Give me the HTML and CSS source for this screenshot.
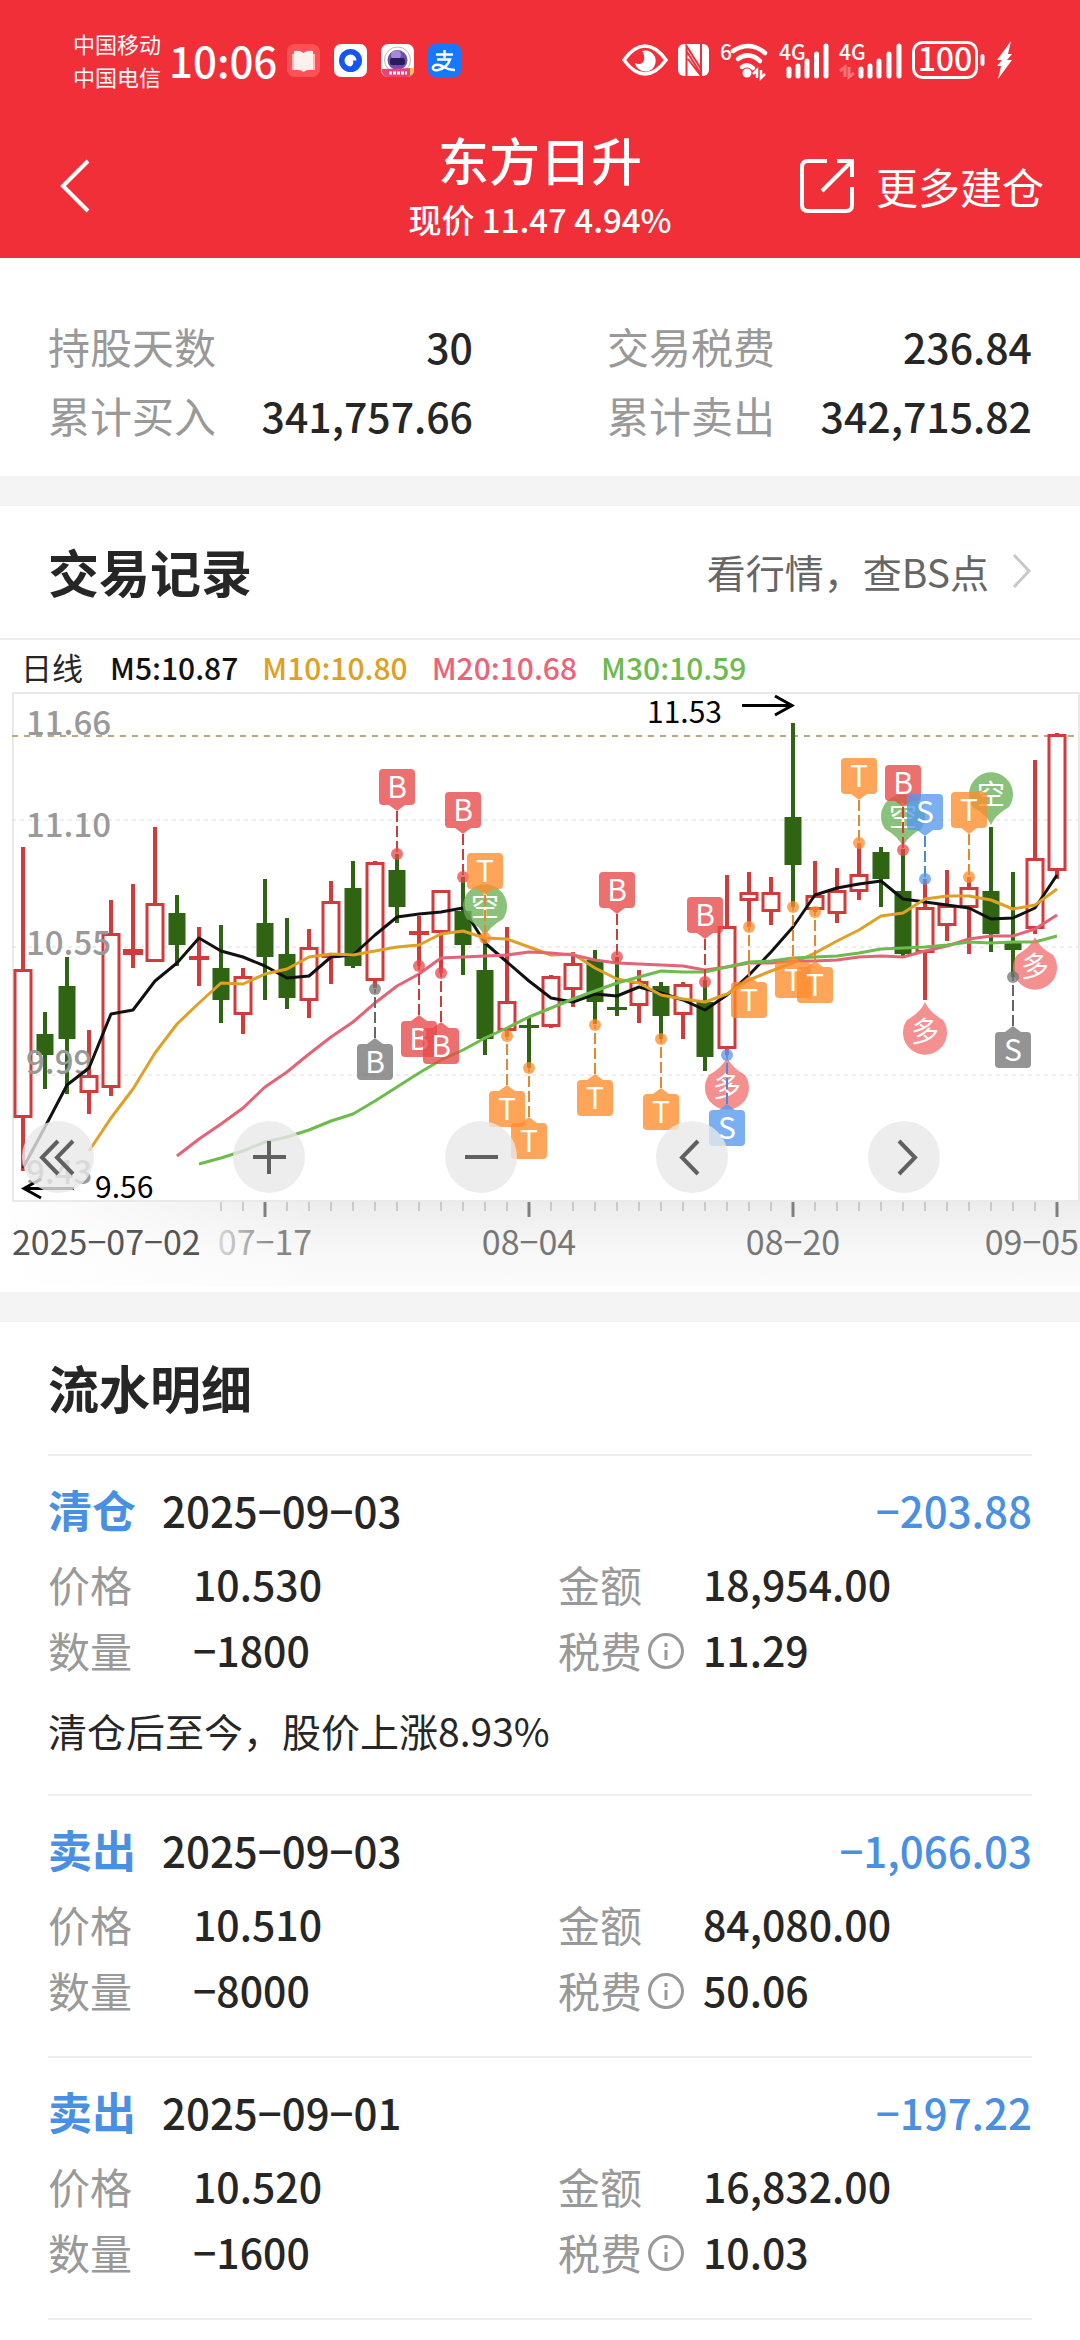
FILE: index.html
```html
<!DOCTYPE html>
<html lang="zh-CN">
<head>
    <meta charset="UTF-8">
    <meta name="viewport" content="width=device-width, initial-scale=1.0">
    <title>东方日升 交易记录</title>
    <link rel="stylesheet" href="styles.css">
</head>
<body>
    <header class="header">
        <div class="status-bar">
            <div class="carriers"><span>中国移动</span><span>中国电信</span></div>
            <span class="clock">10:06</span>
            <div class="app-icons">
                <svg viewBox="0 0 33 33"><rect width="33" height="33" rx="8" fill="#ff5257"/><path d="M5 10h7v16H5zM21 10h7v16h-7z" fill="#ffb9b9"/><path d="M7 7q6-1 9.500 2 3.500-3 9.500-2v19q-6-1-9.500 2-3.500-3-9.500-2z" fill="#fff0ee"/></svg>
                <svg viewBox="0 0 33 33"><rect width="33" height="33" rx="7" fill="#fff"/><circle cx="16.500" cy="16.500" r="11.500" fill="#1456f0"/><path d="M16.500 10.500a6 6 0 0 1 6 6h-3.500a5 5 0 0 1-2.500 6 6 6 0 0 1 0-12z" fill="#fff"/></svg>
                <svg viewBox="0 0 33 33"><rect width="33" height="33" rx="7" fill="#fff"/><circle cx="16.500" cy="16" r="13" fill="none" stroke="#bbb"/><circle cx="16.500" cy="16" r="10" fill="#6d4fb0"/><circle cx="15" cy="11" r="5" fill="#a58ad4"/><rect x="9" y="14" width="15" height="7" rx="2" fill="#2a1c5c"/><path d="M1 25l31-1v5q-1 4-6 4H7q-5 0-6-5z" fill="#e8447a"/><path d="M29 24h3v6l-3 2z" fill="#f4c04e"/><path d="M8 29h18" stroke="#fff" stroke-width="3" stroke-dasharray="3 1"/></svg>
                <svg viewBox="0 0 33 33"><rect width="33" height="33" rx="7" fill="#1677ff"/><path d="M8 10.500h17M16.500 6v8M9 15.500h13Q19 24 10 26q-6 1-5-3 2-4 9-1 7 4 13 4" fill="none" stroke="#fff" stroke-width="2.500"/></svg>
            </div>
            <div class="system-icons">
                <svg width="46" height="34" viewBox="0 0 46 34"><path d="M2 17Q12 3 23 3t21 14Q34 31 23 31T2 17z" fill="none" stroke="#fff" stroke-width="3.500"/><path d="M20 8a10.500 10.500 0 1 1-7 12q7 3 9-3 1-5-2-9z" fill="#fff"/></svg>
                <svg width="31" height="34" viewBox="0 0 31 34"><rect y="1" width="31" height="32" rx="6" fill="#fff"/><path d="M8.500 33V3L23 26M23 1v30L8.500 8M10 16l13 17" fill="none" stroke="#f12f38" stroke-width="2"/></svg>
                <svg width="50" height="38" viewBox="0 0 50 38"><text x="1" y="19" class="net-label">6</text><g fill="none" stroke="#fff" stroke-width="4.500" stroke-linecap="round"><path d="M14 10q17-11 32 2"/><path d="M19 18q11-8 22 2"/><path d="M23 26q6-4 11 1"/></g><circle cx="28" cy="32" r="4.500" fill="#fff"/><path d="M34 33l4-4v8M42 29v8l4-4" fill="none" stroke="#fff" stroke-width="2.500"/></svg>
                <svg width="50" height="38" viewBox="0 0 50 38"><text x="0" y="19" class="net-label">4G</text><path d="M10 28v7M19 25v10M28 20v15M37.500 13v22M47 5v30" stroke="#fff" stroke-width="5" stroke-linecap="round"/></svg>
                <svg width="63" height="38" viewBox="0 0 63 38"><text x="0" y="19" class="net-label">4G</text><path d="M1 30l5-4v10M10 26v10l5-4" fill="none" stroke="#ff7378" stroke-width="3"/><path d="M22 28v7M31 25v10M40 20v15M50 13v22M60 5v30" stroke="#fff" stroke-width="5" stroke-linecap="round"/></svg>
                <svg width="74" height="38" viewBox="0 0 74 38"><rect x="1.500" y="1.500" width="63" height="35" rx="9" fill="none" stroke="#fff" stroke-width="3"/><path d="M70.500 15v8" stroke="#fff" stroke-width="4" stroke-linecap="round"/><text x="33" y="30" class="battery-text">100</text></svg>
                <svg width="17" height="38" viewBox="0 0 17 38"><path d="M15 0L1 19h5l-5 6h4L2 38 16 19h-5l5-6h-4l3-13z" fill="#fff"/></svg>
            </div>
        </div>
        <nav class="nav">
            <button class="back" aria-label="返回">
                <svg width="30" height="54" viewBox="0 0 30 54"><path d="M28 2L3 27l25 25" fill="none" stroke="#fff" stroke-width="4"/></svg>
            </button>
            <div class="nav-title">
                <h1>东方日升</h1>
                <p>现价 11.47 4.94%</p>
            </div>
            <a class="more" href="#">
                <svg width="54" height="54" viewBox="0 0 54 54"><path d="M27 2H8q-6 0-6 6v38q0 6 6 6h38q6 0 6-6V28M37 2h15v16M51 3L22 32" fill="none" stroke="#fff" stroke-width="4"/></svg>
                <span>更多建仓</span>
            </a>
        </nav>
    </header>

    <section class="summary">
        <div class="summary-item"><span>持股天数</span><strong>30</strong></div>
        <div class="summary-item"><span>交易税费</span><strong>236.84</strong></div>
        <div class="summary-item"><span>累计买入</span><strong>341,757.66</strong></div>
        <div class="summary-item"><span>累计卖出</span><strong>342,715.82</strong></div>
    </section>

    <section class="records">
        <div class="records-head">
            <h2>交易记录</h2>
            <a class="quote-link" href="#">看行情，查BS点
                <svg width="20" height="36" viewBox="0 0 20 36"><path d="M2 2l15 16L2 34" fill="none" stroke="#c8c8c8" stroke-width="3"/></svg>
            </a>
        </div>
        <div class="legend">
            <span class="period">日线</span>
            <span class="m5">M5:10.87</span>
            <span class="m10">M10:10.80</span>
            <span class="m20">M20:10.68</span>
            <span class="m30">M30:10.59</span>
        </div>
        <div class="chart">
            <svg class="chart-svg" id="chart" viewBox="0 50 1080 602">
                <defs>
                    <linearGradient id="axisShade" x1="0" y1="0" x2="0" y2="1">
                        <stop offset="0" stop-color="#ececec"/>
                        <stop offset="0.6" stop-color="#f8f8f8"/>
                        <stop offset="1" stop-color="#fbfbfb"/>
                    </linearGradient>
                    <linearGradient id="axisFade">
                        <stop offset="0" stop-color="#fff"/>
                        <stop offset="1" stop-color="#fff" stop-opacity="0"/>
                    </linearGradient>
                    <linearGradient id="dateFade">
                        <stop offset="0" stop-color="#d8d8d8"/>
                        <stop offset="0.6" stop-color="#858585"/>
                    </linearGradient>
                </defs>
            </svg>
            <div class="chart-buttons">
                <button aria-label="最早"><svg viewBox="0 0 72 72"><path d="M36 20L20 36.500 36 53M51 20L35 36.500 51 53"/></svg></button>
                <button aria-label="放大"><svg viewBox="0 0 72 72"><path d="M20 36h33M36 20v33"/></svg></button>
                <button aria-label="缩小"><svg viewBox="0 0 72 72"><path d="M20 36h33"/></svg></button>
                <button aria-label="前移"><svg viewBox="0 0 72 72"><path d="M42 20L26 36.500 42 53"/></svg></button>
                <button aria-label="后移"><svg viewBox="0 0 72 72"><path d="M31 20l16 16.500L31 53"/></svg></button>
            </div>
        </div>
    </section>

    <section class="flow">
        <h2>流水明细</h2>
        <article class="trade">
            <div class="trade-head"><b>清仓</b><time>2025−09−03</time><span class="profit">−203.88</span></div>
            <dl class="trade-grid">
                <dt>价格</dt><dd>10.530</dd>
                <dt>金额</dt><dd>18,954.00</dd>
                <dt>数量</dt><dd>−1800</dd>
                <dt>税费<svg class="info" viewBox="0 0 36 36"><circle cx="18" cy="18" r="16.500"/><path d="M18 17v10M18 10v4"/></svg></dt><dd>11.29</dd>
            </dl>
            <p class="note">清仓后至今，股价上涨8.93%</p>
        </article>
        <article class="trade">
            <div class="trade-head"><b>卖出</b><time>2025−09−03</time><span class="profit">−1,066.03</span></div>
            <dl class="trade-grid">
                <dt>价格</dt><dd>10.510</dd>
                <dt>金额</dt><dd>84,080.00</dd>
                <dt>数量</dt><dd>−8000</dd>
                <dt>税费<svg class="info" viewBox="0 0 36 36"><circle cx="18" cy="18" r="16.500"/><path d="M18 17v10M18 10v4"/></svg></dt><dd>50.06</dd>
            </dl>
        </article>
        <article class="trade">
            <div class="trade-head"><b>卖出</b><time>2025−09−01</time><span class="profit">−197.22</span></div>
            <dl class="trade-grid">
                <dt>价格</dt><dd>10.520</dd>
                <dt>金额</dt><dd>16,832.00</dd>
                <dt>数量</dt><dd>−1600</dd>
                <dt>税费<svg class="info" viewBox="0 0 36 36"><circle cx="18" cy="18" r="16.500"/><path d="M18 17v10M18 10v4"/></svg></dt><dd>10.03</dd>
            </dl>
        </article>
    </section>

    <script src="chart.js"></script>
</body>
</html>
```
FILE: styles.css
```css
* {
    box-sizing: border-box;
    margin: 0;
    padding: 0;
}
body {
    font-family: "Noto Sans CJK SC", "Liberation Sans", sans-serif;
    background-color: #ffffff;
    color: #262626;
    overflow-x: hidden;
}
button {
    border: none;
    background: none;
    font: inherit;
}
a {
    color: inherit;
    text-decoration: none;
}
h2 {
    font-size: 51px;
    line-height: 60px;
    font-weight: bold;
}

/* header */
.header {
    background-color: #f12f38;
    color: #ffffff;
}
.status-bar {
    display: flex;
    align-items: center;
    height: 120px;
    padding: 0 67px 0 73px;
}
.carriers {
    display: flex;
    flex-direction: column;
    font-size: 22px;
    line-height: 33px;
}
.clock {
    margin: 0 10px 0 8px;
    font-size: 42px;
    line-height: 60px;
    font-weight: 500;
}
.app-icons {
    display: flex;
    gap: 14px;
}
.app-icons svg {
    width: 33px;
    height: 33px;
}
.system-icons {
    display: flex;
    align-items: center;
    gap: 10px;
    margin-left: auto;
}
.system-icons svg {
    overflow: visible;
}
.net-label {
    font-size: 21px;
    font-weight: 500;
    fill: #ffffff;
}
.battery-text {
    font-size: 32px;
    font-weight: 500;
    fill: #ffffff;
    text-anchor: middle;
}
.nav {
    display: grid;
    grid-template-columns: 1fr auto 1fr;
    align-items: center;
    height: 138px;
    padding: 0 36px 6px;
}
.back {
    justify-self: start;
    display: flex;
    margin-left: 24px;
}
.nav-title {
    text-align: center;
}
.nav-title h1 {
    font-size: 51px;
    line-height: 66px;
    font-weight: 500;
}
.nav-title p {
    font-size: 33px;
    line-height: 54px;
    font-weight: 500;
}
.more {
    justify-self: end;
    display: flex;
    align-items: center;
    gap: 22px;
    font-size: 42px;
    line-height: 60px;
}

/* summary */
.summary {
    display: grid;
    grid-template-columns: 1fr 1fr;
    column-gap: 134px;
    padding: 53px 48px 27px;
}
.summary-item {
    display: flex;
    justify-content: space-between;
    align-items: center;
    height: 69px;
    font-size: 42px;
}
.summary-item span {
    color: #999999;
}
.summary-item strong {
    font-size: 41px;
    font-weight: 500;
}

/* trade records */
.records {
    border-top: 30px solid #f4f4f4;
}
.records-head {
    display: flex;
    justify-content: space-between;
    align-items: center;
    height: 134px;
    padding: 0 48px 2px;
    border-bottom: 2px solid #eeeeee;
}
.quote-link {
    display: flex;
    align-items: center;
    gap: 23px;
    font-size: 39px;
    color: #666666;
}
.legend {
    display: flex;
    gap: 24px;
    height: 50px;
    padding: 0 21px;
    font-size: 30px;
    line-height: 54px;
    font-weight: 500;
}
.period {
    margin-right: 3px;
    font-size: 31px;
    font-weight: normal;
}
.m5 {
    color: #111111;
}
.m10 {
    color: #e0a020;
}
.m20 {
    color: #ec6378;
}
.m30 {
    color: #6cbb4d;
}
.chart {
    position: relative;
}
.chart-svg {
    display: block;
    width: 100%;
}
.chart-buttons {
    position: absolute;
    left: 2%;
    bottom: 99px;
    width: 85%;
    display: flex;
    justify-content: space-between;
}
.chart-buttons button {
    width: 72px;
    height: 72px;
    border-radius: 50%;
    background-color: rgba(232, 232, 232, 0.8);
}
.chart-buttons svg {
    display: block;
}
.chart-buttons path {
    fill: none;
    stroke: #606060;
    stroke-width: 4;
}
.axis-label {
    font-size: 33px;
    font-weight: 500;
    fill: #999999;
}
.date-label {
    font-size: 34px;
    fill: #777777;
    text-anchor: middle;
}
.date-label.first {
    fill: #555555;
    text-anchor: start;
}
.date-label.fading {
    fill: url(#dateFade);
}
.date-label.last {
    text-anchor: end;
}
.mark-label {
    font-size: 30px;
    fill: #000000;
}
.badge-text {
    font-size: 30px;
    fill: #ffffff;
    text-anchor: middle;
}
.drop-text {
    font-size: 28px;
    fill: #ffffff;
    text-anchor: middle;
}

/* detail list */
.flow {
    border-top: 30px solid #f4f4f4;
    padding: 0 48px;
}
.flow h2 {
    padding-bottom: 2px;
    line-height: 130px;
}
.trade {
    border-top: 2px solid #eeeeee;
    padding: 23px 0 34px;
}
.trade:last-child {
    border-bottom: 2px solid #eeeeee;
}
.trade-head {
    display: flex;
    align-items: center;
    height: 60px;
    margin-bottom: 11px;
    font-size: 42px;
    font-weight: 500;
}
.trade-head b {
    margin-right: 26px;
    font-size: 44px;
    color: #4a90e2;
}
.profit {
    margin-left: auto;
    color: #4a90e2;
}
.trade-grid {
    display: grid;
    grid-template-columns: 145px 365px 145px 1fr;
    grid-auto-rows: 66px;
    align-items: center;
    font-size: 42px;
}
.trade-grid dt {
    display: flex;
    align-items: center;
    gap: 6px;
    color: #999999;
}
.trade-grid dd {
    font-size: 41px;
    font-weight: 500;
}
.info {
    width: 36px;
    height: 36px;
    margin-top: 4px;
    fill: none;
    stroke: #999999;
    stroke-width: 3;
}
.note {
    margin: 20px 0 2px;
    font-size: 39px;
    line-height: 56px;
}
```
FILE: chart.js
```js
const svg = document.getElementById("chart");
const NS = "http://www.w3.org/2000/svg";
const RED = "#d03c3c";
const GREEN = "#2f6412";

// one day every 22 units
const dayX = i => 23 + 22 * i;

function add(tag, attrs, text) {
    const el = document.createElementNS(NS, tag);
    for (const key in attrs) el.setAttribute(key, attrs[key]);
    if (text) el.textContent = text;
    svg.appendChild(el);
}

// [up, high, body top, body bottom, low]
const candles = [
    [1, 207, 329, 478, 531], [0, 372, 394, 415, 449], [0, 317, 346, 399, 454], [1, 390, 435, 453, 474],
    [1, 260, 293, 448, 456], [1, 244, 309, 315, 328], [1, 187, 263, 322, 322], [0, 255, 273, 305, 326],
    [1, 287, 316, 320, 346], [0, 285, 328, 360, 383], [1, 328, 336, 375, 394], [0, 239, 283, 317, 360],
    [0, 278, 314, 358, 369], [1, 289, 307, 361, 378], [1, 241, 261, 318, 344], [0, 221, 248, 326, 328],
    [1, 221, 222, 341, 348], [0, 214, 230, 267, 283], [1, 276, 291, 295, 326], [1, 250, 250, 293, 333],
    [0, 237, 271, 305, 335], [0, 298, 330, 399, 415], [1, 287, 361, 391, 397], [0, 377, 385, 388, 428],
    [1, 335, 336, 387, 388], [1, 312, 323, 350, 367], [0, 310, 320, 362, 384], [0, 317, 367, 370, 376],
    [1, 330, 341, 366, 383], [0, 342, 346, 376, 399], [1, 342, 344, 375, 399], [0, 340, 362, 417, 431],
    [1, 235, 286, 409, 415], [1, 232, 252, 261, 287], [1, 237, 252, 272, 285], [0, 83, 177, 225, 267],
    [1, 221, 255, 270, 272], [1, 228, 250, 274, 283], [1, 203, 234, 252, 260], [0, 207, 212, 239, 267],
    [0, 209, 251, 314, 316], [1, 239, 267, 313, 360], [1, 230, 265, 286, 301], [1, 237, 247, 268, 314],
    [0, 187, 251, 294, 312], [0, 232, 302, 310, 337], [1, 120, 218, 289, 294], [1, 93, 94, 231, 239]
];

const averages = [
    { color: "#111111", start: 0, y: [528, 487, 445, 428, 374, 370, 341, 323, 298, 311, 317, 326, 338, 336, 317, 315, 295, 277, 274, 272, 268, 303, 322, 341, 358, 362, 354, 356, 347, 353, 360, 370, 355, 335, 312, 287, 255, 248, 244, 241, 259, 262, 265, 268, 279, 278, 268, 235] },
    { color: "#dfa025", start: 3, y: [511, 478, 449, 413, 384, 363, 343, 344, 334, 329, 317, 314, 315, 311, 307, 305, 294, 291, 298, 299, 307, 315, 314, 328, 339, 343, 355, 359, 362, 354, 340, 331, 323, 313, 301, 290, 276, 273, 259, 256, 256, 260, 269, 265, 249] },
    { color: "#e46477", start: 7, y: [516, 499, 484, 468, 447, 432, 414, 397, 382, 363, 346, 334, 318, 317, 316, 315, 312, 313, 315, 320, 323, 324, 325, 326, 330, 327, 323, 323, 321, 321, 320, 317, 316, 317, 311, 306, 299, 296, 296, 289, 275] },
    { color: "#6dbb4d", start: 8, y: [524, 518, 511, 502, 497, 490, 481, 474, 461, 447, 433, 420, 410, 398, 388, 377, 368, 359, 351, 343, 337, 331, 332, 332, 327, 322, 321, 318, 317, 316, 313, 309, 308, 307, 305, 302, 303, 302, 302, 296] }
];

const colors = {
    red: ["#e84848", "#d03c3c"],
    orange: ["#ff8c2b", "#e8852f"],
    blue: ["#5598ee", "#4a8ad8"],
    gray: ["#767676", "#666666"]
};

// [day, letter, dot y, above the candle, color]
const badges = [
    [16, "B", 349, 0, "gray"], [17, "B", 214, 1, "red"], [18, "B", 326, 0, "red"], [19, "B", 333, 0, "red"],
    [20, "B", 237, 1, "red"], [21, "T", 298, 1, "orange"], [22, "T", 396, 0, "orange"], [23, "T", 428, 0, "orange"],
    [26, "T", 385, 0, "orange"], [27, "B", 317, 1, "red"], [29, "T", 399, 0, "orange"], [31, "B", 342, 1, "red"],
    [32, "S", 415, 0, "blue"], [33, "T", 287, 0, "orange"], [35, "T", 267, 0, "orange"], [36, "T", 272, 0, "orange"],
    [38, "T", 203, 1, "orange"], [40, "B", 210, 1, "red"], [41, "S", 239, 1, "blue"], [43, "T", 237, 1, "orange"],
    [45, "S", 337, 0, "gray"]
];

// [day, text, circle centre y]
const drops = [
    [21, "空", 267], [40, "空", 177], [44, "空", 155],
    [32, "多", 447], [41, "多", 392], [46, "多", 327]
];

// frame, axis band and grid
add("rect", { x: 0, y: 562, width: 1080, height: 84, fill: "url(#axisShade)" });
add("rect", { x: 0, y: 562, width: 330, height: 84, fill: "url(#axisFade)" });
add("rect", { x: 13, y: 53, width: 1066, height: 508, fill: "#ffffff", stroke: "#e9e9e9", "stroke-width": 2 });
[180, 307, 435].forEach(y => add("path", { d: `M12 ${y}H1078`, stroke: "#dcdcdc", "stroke-dasharray": "4 4" }));
add("path", { d: "M12 96H1075", stroke: "#bfa777", "stroke-width": 2, "stroke-dasharray": "6 6" });

candles.forEach(([up, high, top, bottom, low], i) => {
    const x = dayX(i);
    const color = up ? RED : GREEN;
    add("path", { d: `M${x} ${high}V${top}M${x} ${bottom}V${low}`, stroke: color, "stroke-width": 4 });
    if (up && bottom - top > 7) {
        add("rect", { x: x - 8, y: top + 1.5, width: 16, height: bottom - top - 3, fill: "#ffffff", stroke: color, "stroke-width": 3 });
    } else {
        const half = up || bottom - top < 6 ? 10 : 8.5;
        add("rect", { x: x - half, y: top, width: half * 2, height: bottom - top, fill: color });
    }
});

[["11.66", 95], ["11.10", 197], ["10.55", 315], ["9.99", 434], ["9.43", 544]].forEach(([t, y]) => {
    add("text", { x: 26, y, class: "axis-label" }, t);
});

averages.forEach(({ color, start, y }) => {
    const points = y.map((v, n) => `${dayX(start + n)},${v}`).join(" ");
    add("polyline", { points, fill: "none", stroke: color, "stroke-width": 3, "stroke-linejoin": "round" });
});

drops.forEach(([day, text, y]) => {
    const x = dayX(day);
    const down = text === "空";
    const s = down ? 1 : -1;
    const fill = down ? "#6db35a" : "#f27474";
    add("path", {
        d: `M${x - 18} ${y + 12 * s}A22 22 0 1 ${down ? 1 : 0} ${x + 18} ${y + 12 * s}Q${x + 4} ${y + 20 * s} ${x} ${y + 30 * s}Q${x - 4} ${y + 20 * s} ${x - 18} ${y + 12 * s}z`,
        fill, opacity: 0.8
    });
    add("text", { x, y: y + 10, class: "drop-text" }, text);
});

badges.forEach(([day, letter, dot, above, name]) => {
    const x = dayX(day);
    const [fill, line] = colors[name];
    const top = above ? dot - 85 : dot + 55;
    const edge = above ? top + 36 : top;
    const tip = above ? edge + 6 : edge - 6;
    add("path", { d: `M${x} ${tip}V${dot}`, stroke: line, "stroke-width": 2, "stroke-dasharray": "11 4" });
    add("circle", { cx: x, cy: dot, r: 6, fill, opacity: 0.75 });
    add("rect", { x: x - 18, y: top, width: 36, height: 36, rx: 4, fill, opacity: 0.78 });
    add("path", { d: `M${x - 8} ${edge}H${x + 8}L${x} ${tip}z`, fill, opacity: 0.78 });
    add("text", { x, y: top + 29, class: "badge-text" }, letter);
});

// highest and lowest price
add("text", { x: 647, y: 83, class: "mark-label" }, "11.53");
add("path", { d: "M742 65.5H792M775 56L792 65.500L775 75", fill: "none", stroke: "#000000", "stroke-width": 3 });
add("text", { x: 95, y: 558, class: "mark-label" }, "9.56");
add("path", { d: "M74 548.5H24M41 539L24 548.500L41 558", fill: "none", stroke: "#000000", "stroke-width": 3 });

// date axis
for (let i = 9; i < candles.length; i++) {
    const major = i % 12 === 11;
    add("path", { d: `M${dayX(i)} 562V${major ? 577 : 571}`, stroke: major ? "#808080" : "#a8a8a8", "stroke-width": major ? 3 : 1 });
}
add("text", { x: 12, y: 615, class: "date-label first" }, "2025−07−02");
add("text", { x: 265, y: 615, class: "date-label fading" }, "07−17");
add("text", { x: 529, y: 615, class: "date-label" }, "08−04");
add("text", { x: 793, y: 615, class: "date-label" }, "08−20");
add("text", { x: 1079, y: 615, class: "date-label last" }, "09−05");
```
